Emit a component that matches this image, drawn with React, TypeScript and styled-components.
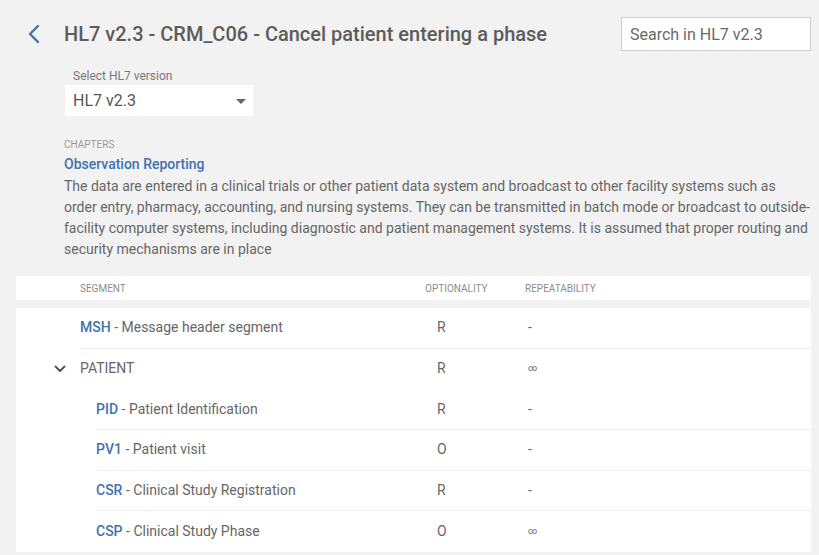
import React from "react";
import styled, { createGlobalStyle } from "styled-components";

const GlobalStyle = createGlobalStyle`
  html, body {
    margin: 0;
    padding: 0;
    background: #f2f2f2;
    font-family: Roboto, "Noto Sans", Arial, sans-serif;
    color: #666;
  }
  * { box-sizing: border-box; }
`;

const Page = styled.div`
  width: 819px;
  height: 555px;
  overflow: hidden;
  padding: 17px 8px 0 16px;
`;

const Header = styled.div`
  display: flex;
  align-items: center;
  height: 34px;
`;

const BackButton = styled.button`
  width: 48px;
  height: 34px;
  padding: 0 0 0 11px;
  border: 0;
  background: none;
  display: flex;
  align-items: center;
  cursor: pointer;
`;

const Title = styled.h1`
  flex: 1;
  margin: 0;
  font-size: 20px;
  font-weight: 500;
  color: #5c5c5c;
  white-space: nowrap;
`;

const Search = styled.input`
  width: 190px;
  height: 34px;
  border: 1px solid #cccccc;
  background: #fff;
  padding: 0 8px;
  font: 16px Roboto, sans-serif;
  color: #666;
  outline: none;
  &::placeholder { color: #6a6a6a; }
`;

const VersionField = styled.div`
  margin: 18px 0 0 49px;
  width: 188px;
`;

const FieldLabel = styled.div`
  font-size: 12px;
  color: #787878;
  padding-left: 8px;
  line-height: 14px;
`;

const SelectBox = styled.div`
  margin-top: 2px;
  height: 31px;
  background: #fff;
  display: flex;
  align-items: center;
  justify-content: space-between;
  padding: 0 7px 0 8px;
  font-size: 16px;
  color: #555;
`;

const Caret = styled.span`
  width: 0;
  height: 0;
  border-left: 5px solid transparent;
  border-right: 5px solid transparent;
  border-top: 5px solid #666;
  margin-top: 1px;
`;

const Chapter = styled.section`
  margin: 23px 0 0 48px;
`;

const Overline = styled.div`
  font-size: 10px;
  color: #9a9a9a;
  line-height: 12px;
  text-transform: uppercase;
`;

const ChapterName = styled.div`
  margin-top: 5px;
  font-size: 14px;
  font-weight: 500;
  color: #3f72ae;
  line-height: 16px;
`;

const Description = styled.p`
  margin: 4px 0 0;
  font-size: 14px;
  line-height: 21px;
  color: #666;
`;

const Table = styled.div`
  margin-top: 16px;
`;

const HeadRow = styled.div`
  display: flex;
  align-items: center;
  height: 24px;
  background: #fff;
  font-size: 10px;
  color: #8c8c8c;
  text-transform: uppercase;
`;

const HeadCell = styled.div<{ $width?: number; $pad?: number }>`
  ${({ $width }) => ($width ? `width: ${$width}px;` : "flex: 1;")}
  padding-left: ${({ $pad }) => $pad || 0}px;
`;

const Body = styled.div`
  margin-top: 8px;
  background: #fff;
`;

const Row = styled.div`
  display: flex;
  height: 40.7px;
`;

const Gutter = styled.div<{ $indent: number }>`
  width: ${({ $indent }) => $indent}px;
  flex-shrink: 0;
  display: flex;
  align-items: center;
  justify-content: flex-end;
  padding-right: 14px;
`;

const RowBody = styled.div<{ $divider: boolean }>`
  flex: 1;
  display: flex;
  align-items: center;
  padding-bottom: 1px;
  border-bottom: 1px solid ${({ $divider }) => ($divider ? "#efefef" : "transparent")};
  font-size: 14px;
  color: #666;
`;

const NameCell = styled.div`
  flex: 1;
`;

const Code = styled.span`
  color: #3f72ae;
  font-weight: 500;
`;

const OptCell = styled.div`
  width: 100px;
  padding-left: 12px;
`;

const RepCell = styled.div<{ $small?: boolean }>`
  width: 286px;
  padding-left: 3px;
  font-size: ${({ $small }) => ($small ? "9px" : "14px")};
`;

type Segment = {
  code?: string;
  name: string;
  opt: string;
  rep: string;
  level: number;
  group?: boolean;
  divider: boolean;
};

const segments: Segment[] = [
  { code: "MSH", name: "Message header segment", opt: "R", rep: "-", level: 0, divider: true },
  { name: "PATIENT", opt: "R", rep: "∞", level: 0, group: true, divider: false },
  { code: "PID", name: "Patient Identification", opt: "R", rep: "-", level: 1, divider: true },
  { code: "PV1", name: "Patient visit", opt: "O", rep: "-", level: 1, divider: true },
  { code: "CSR", name: "Clinical Study Registration", opt: "R", rep: "-", level: 1, divider: true },
  { code: "CSP", name: "Clinical Study Phase", opt: "O", rep: "∞", level: 1, divider: false },
];

const ChevronLeft = () => (
  <svg width="14" height="20" viewBox="0 0 14 20">
    <path d="M11 2 L3 10 L11 18" fill="none" stroke="#3f72ae" strokeWidth="2.4" strokeLinecap="round" strokeLinejoin="round" />
  </svg>
);

const ChevronDown = () => (
  <svg width="12" height="8" viewBox="0 0 12 8">
    <path d="M1.5 1.5 L6 6 L10.5 1.5" fill="none" stroke="#555" strokeWidth="2" strokeLinecap="round" strokeLinejoin="round" />
  </svg>
);

export default function App() {
  return (
    <>
      <GlobalStyle />
      <Page>
        <Header>
          <BackButton aria-label="Back">
            <ChevronLeft />
          </BackButton>
          <Title>HL7 v2.3 - CRM_C06 - Cancel patient entering a phase</Title>
          <Search placeholder="Search in HL7 v2.3" />
        </Header>

        <VersionField>
          <FieldLabel>Select HL7 version</FieldLabel>
          <SelectBox>
            HL7 v2.3
            <Caret />
          </SelectBox>
        </VersionField>

        <Chapter>
          <Overline>Chapters</Overline>
          <ChapterName>Observation Reporting</ChapterName>
          <Description>
            The data are entered in a clinical trials or other patient data system and broadcast to other
            facility systems such as order entry, pharmacy, accounting, and nursing systems. They can be
            transmitted in batch mode or broadcast to outside-facility computer systems, including diagnostic
            and patient management systems. It is assumed that proper routing and security mechanisms are in
            place
          </Description>
        </Chapter>

        <Table>
          <HeadRow>
            <HeadCell $pad={64}>Segment</HeadCell>
            <HeadCell $width={100}>Optionality</HeadCell>
            <HeadCell $width={286}>Repeatability</HeadCell>
          </HeadRow>
          <Body>
            {segments.map((s, i) => (
              <Row key={i}>
                <Gutter $indent={64 + s.level * 16}>{s.group && <ChevronDown />}</Gutter>
                <RowBody $divider={s.divider}>
                  <NameCell>
                    {s.code ? (
                      <>
                        <Code>{s.code}</Code> - {s.name}
                      </>
                    ) : (
                      s.name
                    )}
                  </NameCell>
                  <OptCell>{s.opt}</OptCell>
                  <RepCell $small={s.rep === "∞"}>{s.rep}</RepCell>
                </RowBody>
              </Row>
            ))}
          </Body>
        </Table>
      </Page>
    </>
  );
}
